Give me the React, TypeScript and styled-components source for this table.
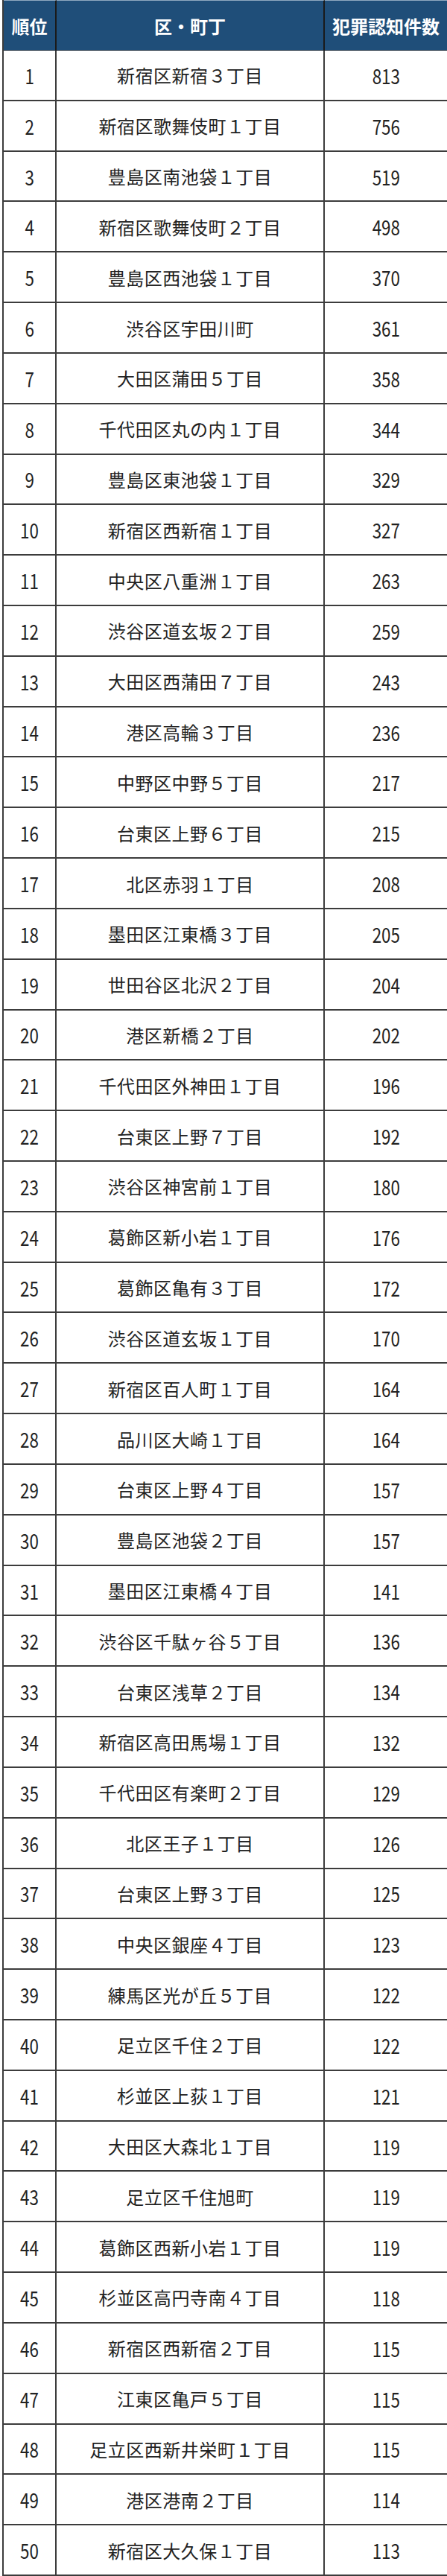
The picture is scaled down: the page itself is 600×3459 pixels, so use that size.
import React from "react";
import styled, { createGlobalStyle } from "styled-components";

const GlobalStyle = createGlobalStyle`
  html, body { margin: 0; padding: 0; background: #ffffff; }
  * { box-sizing: border-box; }
`;

const rows: [number, string, number][] = [
  [1, "新宿区新宿３丁目", 813],
  [2, "新宿区歌舞伎町１丁目", 756],
  [3, "豊島区南池袋１丁目", 519],
  [4, "新宿区歌舞伎町２丁目", 498],
  [5, "豊島区西池袋１丁目", 370],
  [6, "渋谷区宇田川町", 361],
  [7, "大田区蒲田５丁目", 358],
  [8, "千代田区丸の内１丁目", 344],
  [9, "豊島区東池袋１丁目", 329],
  [10, "新宿区西新宿１丁目", 327],
  [11, "中央区八重洲１丁目", 263],
  [12, "渋谷区道玄坂２丁目", 259],
  [13, "大田区西蒲田７丁目", 243],
  [14, "港区高輪３丁目", 236],
  [15, "中野区中野５丁目", 217],
  [16, "台東区上野６丁目", 215],
  [17, "北区赤羽１丁目", 208],
  [18, "墨田区江東橋３丁目", 205],
  [19, "世田谷区北沢２丁目", 204],
  [20, "港区新橋２丁目", 202],
  [21, "千代田区外神田１丁目", 196],
  [22, "台東区上野７丁目", 192],
  [23, "渋谷区神宮前１丁目", 180],
  [24, "葛飾区新小岩１丁目", 176],
  [25, "葛飾区亀有３丁目", 172],
  [26, "渋谷区道玄坂１丁目", 170],
  [27, "新宿区百人町１丁目", 164],
  [28, "品川区大崎１丁目", 164],
  [29, "台東区上野４丁目", 157],
  [30, "豊島区池袋２丁目", 157],
  [31, "墨田区江東橋４丁目", 141],
  [32, "渋谷区千駄ヶ谷５丁目", 136],
  [33, "台東区浅草２丁目", 134],
  [34, "新宿区高田馬場１丁目", 132],
  [35, "千代田区有楽町２丁目", 129],
  [36, "北区王子１丁目", 126],
  [37, "台東区上野３丁目", 125],
  [38, "中央区銀座４丁目", 123],
  [39, "練馬区光が丘５丁目", 122],
  [40, "足立区千住２丁目", 122],
  [41, "杉並区上荻１丁目", 121],
  [42, "大田区大森北１丁目", 119],
  [43, "足立区千住旭町", 119],
  [44, "葛飾区西新小岩１丁目", 119],
  [45, "杉並区高円寺南４丁目", 118],
  [46, "新宿区西新宿２丁目", 115],
  [47, "江東区亀戸５丁目", 115],
  [48, "足立区西新井栄町１丁目", 115],
  [49, "港区港南２丁目", 114],
  [50, "新宿区大久保１丁目", 113],
];

const Table = styled.div`
  margin-left: 3px;
  height: 3459px;
  display: grid;
  grid-template-columns: 71px 360px 1fr;
  grid-template-rows: 68px repeat(50, 1fr);
  border-left: 2px solid #3c3c3c;
  font-family: "Noto Sans CJK JP", "Noto Sans", sans-serif;
`;

const HeadCell = styled.div<{ $last?: boolean }>`
  display: flex;
  align-items: center;
  justify-content: center;
  background: #1f4e79;
  color: #ffffff;
  font-weight: 700;
  font-size: 24px;
  border-right: ${(p) => (p.$last ? "0" : "2px solid #1a1a1a")};
  border-bottom: 1px solid #1a2a3a;
  border-top: 1px solid #8fa8c0;
`;

const Cell = styled.div<{ $last?: boolean }>`
  display: flex;
  align-items: center;
  justify-content: center;
  color: #222222;
  font-size: 24px;
  font-weight: 400;
  border-right: ${(p) => (p.$last ? "0" : "2px solid #3c3c3c")};
  border-bottom: 2px solid #3c3c3c;
  letter-spacing: 0.5px;
`;

const Num = styled.span`
  display: inline-block;
  font-size: 28px;
  letter-spacing: 0;
  transform: scaleX(0.8);
`;

export default function App() {
  return (
    <>
      <GlobalStyle />
      <Table>
        <HeadCell>順位</HeadCell>
        <HeadCell>区・町丁</HeadCell>
        <HeadCell $last>犯罪認知件数</HeadCell>
        {rows.map(([rank, name, count]) => (
          <React.Fragment key={rank}>
            <Cell>
              <Num>{rank}</Num>
            </Cell>
            <Cell>{name}</Cell>
            <Cell $last>
              <Num>{count}</Num>
            </Cell>
          </React.Fragment>
        ))}
      </Table>
    </>
  );
}
